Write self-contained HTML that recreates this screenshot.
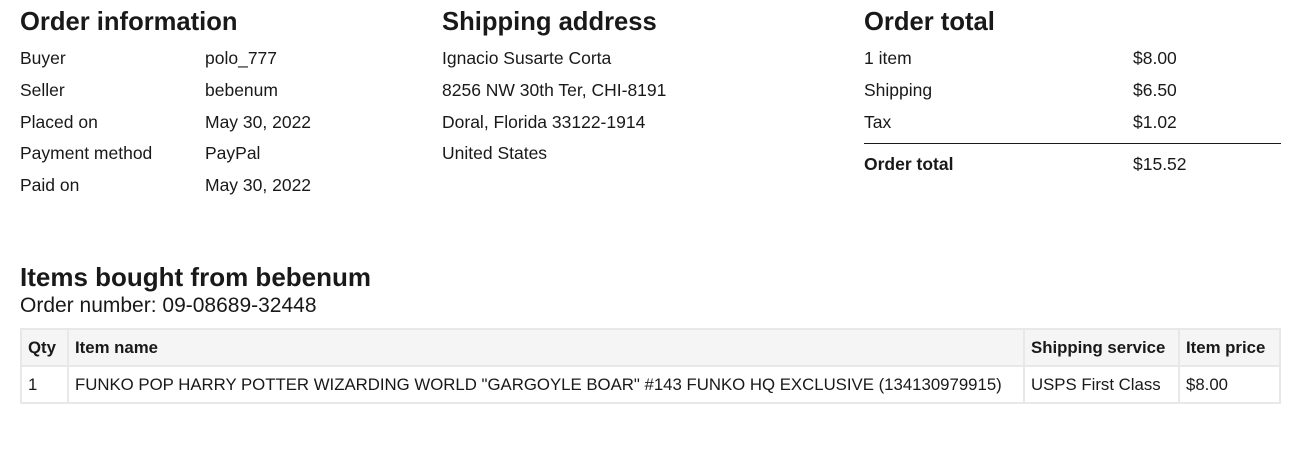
<!DOCTYPE html>
<html><head><meta charset="utf-8"><style>
body{margin:0;width:1309px;height:451px;background:#fff;font-family:"Liberation Sans",Arial,sans-serif;color:#191919;position:relative;overflow:hidden}
.a{position:absolute;white-space:nowrap;font-size:17.5px;line-height:20px}
h2{position:absolute;margin:0;font-size:25.6px;font-weight:bold;line-height:30px;white-space:nowrap}
.b{font-weight:bold}
table{position:absolute;left:20px;top:328px;width:1261px;border-collapse:collapse;font-size:16.8px}
td,th{border:2px solid #e8e8e8;padding:0 6px;text-align:left;white-space:nowrap;height:35px}
th{background:#f5f5f5;font-weight:bold}
</style></head><body>
<h2 style="left:20px;top:7px">Order information</h2>
<div class="a" style="left:20px;top:48px">Buyer</div><div class="a" style="left:205px;top:48px">polo_777</div>
<div class="a" style="left:20px;top:80px">Seller</div><div class="a" style="left:205px;top:80px">bebenum</div>
<div class="a" style="left:20px;top:112px">Placed on</div><div class="a" style="left:205px;top:112px">May 30, 2022</div>
<div class="a" style="left:20px;top:143px">Payment method</div><div class="a" style="left:205px;top:143px">PayPal</div>
<div class="a" style="left:20px;top:175px">Paid on</div><div class="a" style="left:205px;top:175px">May 30, 2022</div>

<h2 style="left:442px;top:7px">Shipping address</h2>
<div class="a" style="left:442px;top:48px">Ignacio Susarte Corta</div>
<div class="a" style="left:442px;top:80px">8256 NW 30th Ter, CHI-8191</div>
<div class="a" style="left:442px;top:112px">Doral, Florida 33122-1914</div>
<div class="a" style="left:442px;top:143px">United States</div>

<h2 style="left:864px;top:7px">Order total</h2>
<div class="a" style="left:864px;top:48px">1 item</div><div class="a" style="left:1133px;top:48px">$8.00</div>
<div class="a" style="left:864px;top:80px">Shipping</div><div class="a" style="left:1133px;top:80px">$6.50</div>
<div class="a" style="left:864px;top:112px">Tax</div><div class="a" style="left:1133px;top:112px">$1.02</div>
<div style="position:absolute;left:864px;top:143px;width:417px;height:1px;background:#191919"></div>
<div class="a b" style="left:864px;top:154px">Order total</div><div class="a" style="left:1133px;top:154px">$15.52</div>

<h2 style="left:20px;top:262px;font-size:26px">Items bought from bebenum</h2>
<div class="a" style="left:20px;top:294px;font-size:21px;line-height:24px">Order number: 09-08689-32448</div>
<table>
<tr><th style="width:33px">Qty</th><th>Item name</th><th style="width:141px">Shipping service</th><th style="width:87px">Item price</th></tr>
<tr><td>1</td><td>FUNKO POP HARRY POTTER WIZARDING WORLD "GARGOYLE BOAR" #143 FUNKO HQ EXCLUSIVE (134130979915)</td><td>USPS First Class</td><td>$8.00</td></tr>
</table>
</body></html>
